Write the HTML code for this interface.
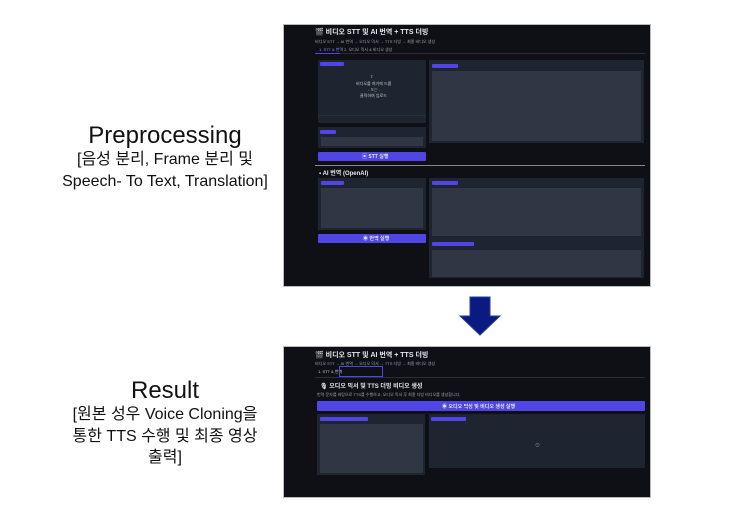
<!DOCTYPE html>
<html><head><meta charset="utf-8"><style>
*{margin:0;padding:0;box-sizing:border-box}
body{width:743px;height:518px;background:#fff;position:relative;overflow:hidden;font-family:"Liberation Sans","Noto Sans CJK KR",sans-serif}
.t{position:absolute;left:0;width:330px;text-align:center;color:#111;white-space:nowrap;line-height:20px}
.a{position:absolute}
.scr{position:absolute;background:#0e1016;border:1px solid #bbb}
.p{position:absolute;background:#1e2430}
.i{position:absolute;background:#2f3745}
.lb{position:absolute;background:#4f46e5;height:4px;border-radius:1px}
.btn{position:absolute;background:#4f46e5;border-radius:1px}
.w{position:absolute;color:#e5e7eb;font-size:6px;font-weight:bold;white-space:nowrap}
.s{position:absolute;color:#9ca3af;font-size:4px;white-space:nowrap}
.g{position:absolute;background:#888;height:1px}
</style></head><body>
<div class="t" style="top:124px;font-size:24px;line-height:24px">Preprocessing</div>
<div class="t" style="top:150px;font-size:16px">[음성 분리, Frame 분리 및</div>
<div class="t" style="top:172px;font-size:16px">Speech- To Text, Translation]</div>
<div class="t" style="top:379px;font-size:24px;line-height:24px">Result</div>
<div class="t" style="top:405px;font-size:16px">[원본 성우 Voice Cloning을</div>
<div class="t" style="top:427px;font-size:16px">통한 TTS 수행 및 최종 영상</div>
<div class="t" style="top:448px;font-size:16px">출력]</div>

<svg class="a" style="left:458px;top:294px" width="46" height="44"><path d="M12 3H32V22H42L22 41L2 22H12Z" fill="#0b1a80" stroke="#2c3a90" stroke-width="1"/></svg>

<div class="scr" style="left:283px;top:24px;width:368px;height:263px">
 <div class="w" style="left:31px;top:2px;font-size:7px">🎬 비디오 STT 및 AI 번역 + TTS 더빙</div>
 <div class="s" style="left:31px;top:14px">비디오 STT → AI 번역 → 오디오 믹서 → TTS 더빙 → 최종 비디오 생성</div>
 <div class="s" style="left:35px;top:22px;color:#818cf8">1. STT &amp; 번역</div>
 <div class="s" style="left:60px;top:22px">2. 오디오 믹서 &amp; 비디오 생성</div>
 <div class="g" style="left:31px;top:28px;width:330px;background:#2a2e38"></div>
 <div class="g" style="left:31px;top:28px;width:25px;background:#4f46e5"></div>
 <div class="p" style="left:34px;top:35px;width:108px;height:63px"></div>
 <div class="lb" style="left:36px;top:37px;width:24px"></div>
 <div class="s" style="left:86px;top:49px;color:#ccc">⇪</div>
 <div class="s" style="left:72px;top:56px;color:#ccc">비디오를 여기에 드롭</div>
 <div class="s" style="left:84px;top:62px">- 또는 -</div>
 <div class="s" style="left:76px;top:68px;color:#ccc">클릭하여 업로드</div>
 <div class="g" style="left:34px;top:90px;width:108px;background:#2a303a"></div>
 <div class="p" style="left:145px;top:35px;width:215px;height:83px"></div>
 <div class="lb" style="left:148px;top:39px;width:26px"></div>
 <div class="i" style="left:148px;top:46px;width:209px;height:70px"></div>
 <div class="p" style="left:34px;top:102px;width:108px;height:21px"></div>
 <div class="lb" style="left:36px;top:105px;width:16px"></div>
 <div class="i" style="left:37px;top:112px;width:102px;height:9px"></div>
 <div class="btn" style="left:34px;top:127px;width:108px;height:9px"></div>
 <div class="w" style="left:78px;top:128px;font-size:5px">▣ STT 실행</div>
 <div class="g" style="left:31px;top:140px;width:330px;background:#888"></div>
 <div class="w" style="left:35px;top:143px">▪ AI 번역 (OpenAI)</div>
 <div class="p" style="left:34px;top:153px;width:108px;height:52px"></div>
 <div class="lb" style="left:37px;top:156px;width:23px"></div>
 <div class="i" style="left:37px;top:163px;width:102px;height:40px"></div>
 <div class="btn" style="left:34px;top:209px;width:108px;height:9px"></div>
 <div class="w" style="left:79px;top:210px;font-size:5px">◉ 번역 실행</div>
 <div class="p" style="left:145px;top:153px;width:215px;height:100px"></div>
 <div class="lb" style="left:148px;top:156px;width:26px"></div>
 <div class="i" style="left:148px;top:163px;width:209px;height:48px"></div>
 <div class="lb" style="left:148px;top:217px;width:42px"></div>
 <div class="i" style="left:148px;top:225px;width:209px;height:27px"></div>
</div>

<div class="scr" style="left:283px;top:346px;width:368px;height:152px">
 <div class="w" style="left:31px;top:3px;font-size:7px">🎬 비디오 STT 및 AI 번역 + TTS 더빙</div>
 <div class="s" style="left:31px;top:14px">비디오 STT → AI 번역 → 오디오 믹서 → TTS 더빙 → 최종 비디오 생성</div>
 <div class="s" style="left:34px;top:22px;color:#ccc">1. STT &amp; 번역</div>
 <div class="a" style="left:55px;top:19px;width:44px;height:11px;border:1px solid #4f46e5"></div>
 <div class="g" style="left:31px;top:30px;width:330px;background:#2a2e38"></div>
 <div class="w" style="left:36px;top:34px">🎙 오디오 믹서 및 TTS 더빙 비디오 생성</div>
 <div class="s" style="left:33px;top:45px">번역 문자를 바탕으로 TTS를 수행하고, 오디오 믹서 후 최종 더빙 비디오를 생성합니다.</div>
 <div class="btn" style="left:33px;top:54px;width:328px;height:10px"></div>
 <div class="w" style="left:158px;top:56px;font-size:5px">◉ 오디오 믹싱 및 비디오 생성 실행</div>
 <div class="p" style="left:33px;top:67px;width:108px;height:61px"></div>
 <div class="lb" style="left:36px;top:70px;width:48px"></div>
 <div class="i" style="left:36px;top:77px;width:103px;height:49px"></div>
 <div class="p" style="left:145px;top:67px;width:216px;height:54px"></div>
 <div class="lb" style="left:147px;top:70px;width:35px"></div>
 <div class="s" style="left:251px;top:95px;font-size:5px">⊙</div>
</div>
</body></html>
